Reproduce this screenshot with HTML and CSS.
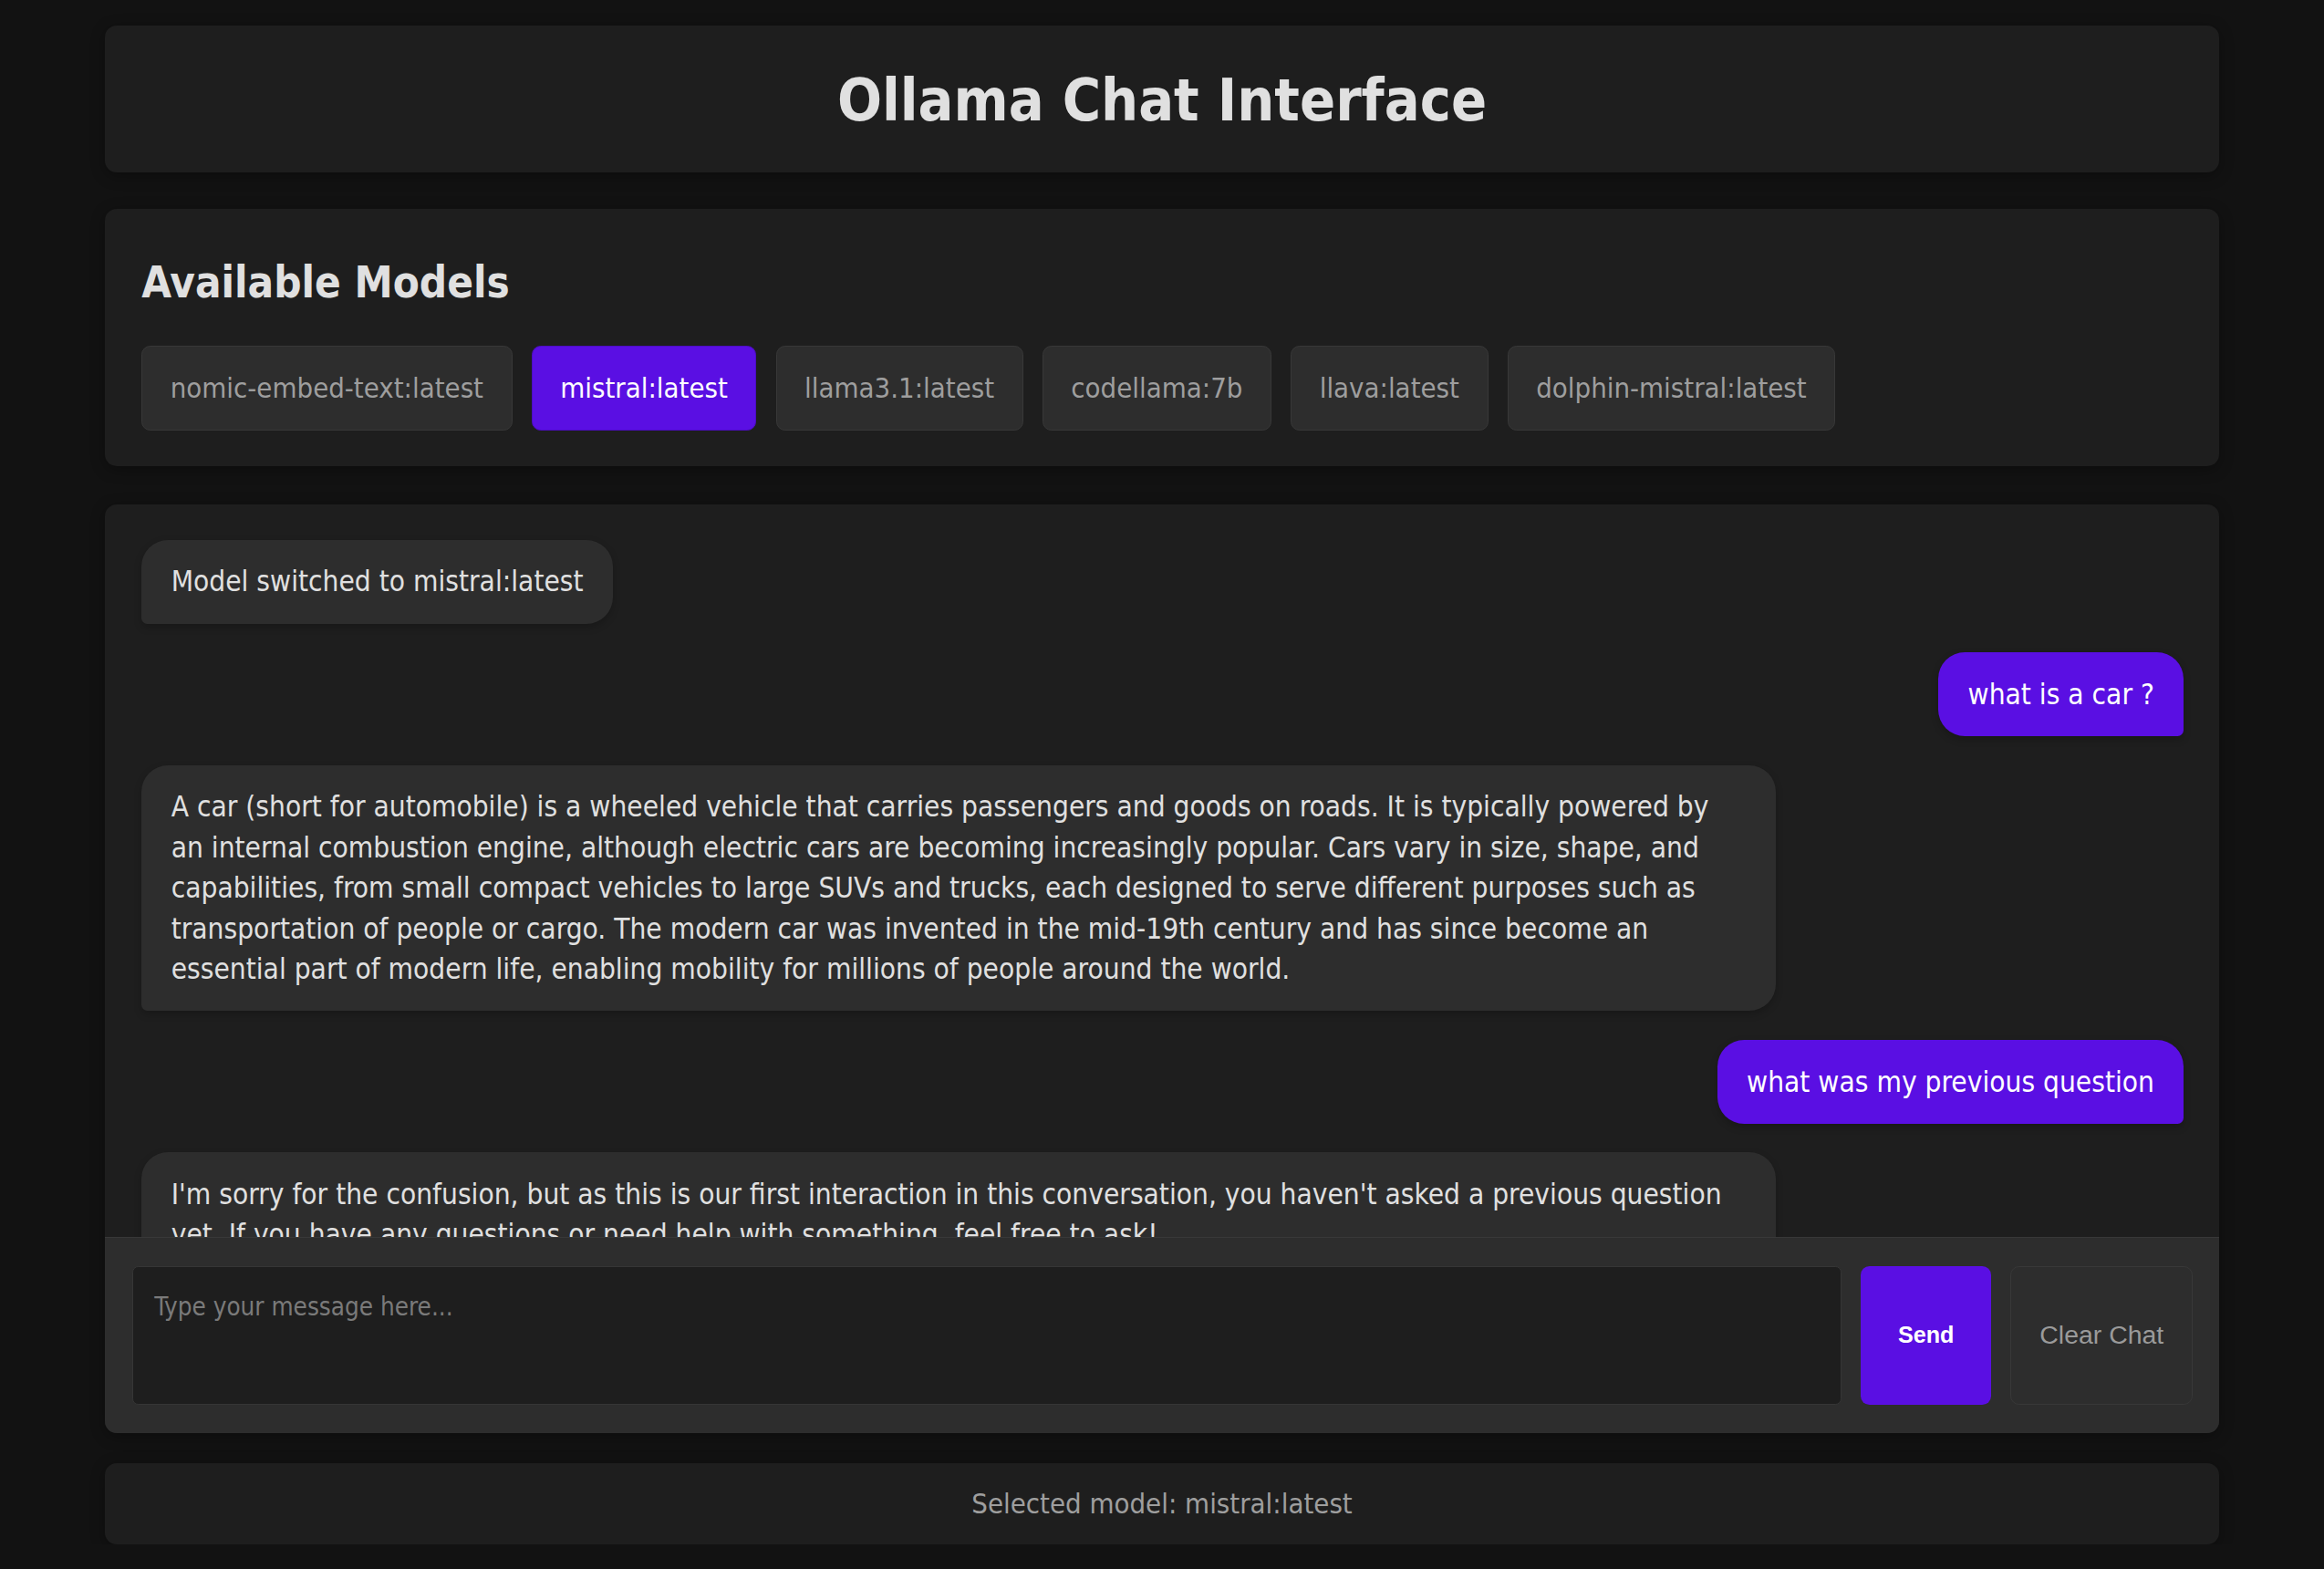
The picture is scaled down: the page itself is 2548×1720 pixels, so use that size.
FILE: index.html
```html
<!DOCTYPE html>
<html lang="en">
<head>
<meta charset="utf-8">
<title>Ollama Chat Interface</title>
<link rel="stylesheet" href="styles.css">
</head>
<body>
<div class="container">
  <header class="card header">
    <h1 class="title">Ollama Chat Interface</h1>
  </header>

  <section class="card models">
    <h2 class="section-title">Available Models</h2>
    <div class="model-list">
      <button class="model-btn">nomic-embed-text:latest</button>
      <button class="model-btn active">mistral:latest</button>
      <button class="model-btn">llama3.1:latest</button>
      <button class="model-btn">codellama:7b</button>
      <button class="model-btn">llava:latest</button>
      <button class="model-btn">dolphin-mistral:latest</button>
    </div>
  </section>

  <section class="card chat">
    <div class="messages">
      <div class="msg assistant">Model switched to mistral:latest</div>
      <div class="msg user">what is a car ?</div>
      <div class="msg assistant">A car (short for automobile) is a wheeled vehicle that carries passengers and goods on roads. It is typically powered by an internal combustion engine, although electric cars are becoming increasingly popular. Cars vary in size, shape, and capabilities, from small compact vehicles to large SUVs and trucks, each designed to serve different purposes such as transportation of people or cargo. The modern car was invented in the mid-19th century and has since become an essential part of modern life, enabling mobility for millions of people around the world.</div>
      <div class="msg user">what was my previous question</div>
      <div class="msg assistant">I'm sorry for the confusion, but as this is our first interaction in this conversation, you haven't asked a previous question yet. If you have any questions or need help with something, feel free to ask!</div>
    </div>
    <div class="input-bar">
      <textarea class="input" placeholder="Type your message here..."></textarea>
      <button class="send-btn">Send</button>
      <button class="clear-btn">Clear Chat</button>
    </div>
  </section>

  <footer class="card status">Selected model: mistral:latest</footer>
</div>
</body>
</html>
```

FILE: styles.css
```css
html {
  zoom: 1.625;
}

* {
  box-sizing: border-box;
}

body {
  margin: 0;
  background: #121212;
  color: #e0e0e0;
  font-family: "DejaVu Sans Condensed", "DejaVu Sans", sans-serif;
}

.container {
  width: 1427px;
  margin: 0 auto;
  padding-top: 17px;
}

.card {
  background: #1e1e1e;
  border-radius: 8px;
  box-shadow: 0 2px 10px rgba(0, 0, 0, 0.3);
}

.header {
  height: 99px;
  padding-top: 2px;
  display: flex;
  align-items: center;
  justify-content: center;
  margin-bottom: 25px;
}

.title {
  margin: 0;
  font-size: 39.5px;
  line-height: 48px;
  font-weight: bold;
  color: #e0e0e0;
}

.models {
  padding: 26px 25px 24px;
  margin-bottom: 26px;
}

.section-title {
  margin: 0 0 18px;
  font-size: 29px;
  line-height: 48px;
  font-weight: bold;
  color: #e0e0e0;
}

.model-list {
  display: flex;
  flex-wrap: wrap;
  gap: 13px;
}

.model-btn {
  font-family: inherit;
  font-size: 19px;
  line-height: 24px;
  padding: 16px 18.8px;
  background: #2d2d2d;
  color: #9e9e9e;
  border: 1px solid #383838;
  border-radius: 6px;
}

.model-btn.active {
  background: #5a0fe3;
  color: #ffffff;
  border-color: #4c0cc4;
}

.chat {
  overflow: hidden;
  margin-bottom: 20px;
}

.messages {
  height: 494px;
  overflow: hidden;
  padding: 24px 24px 0 25px;
  display: flex;
  flex-direction: column;
  gap: 19.5px;
}

.msg {
  max-width: 80%;
  padding: 14.5px 20px;
  font-size: 19.3px;
  line-height: 27.4px;
  border-radius: 18px;
  box-shadow: 0 2px 5px rgba(0, 0, 0, 0.2);
  flex-shrink: 0;
}

.msg.assistant {
  align-self: flex-start;
  background: #2d2d2d;
  color: #e0e0e0;
  border-bottom-left-radius: 4px;
}

.msg.user {
  align-self: flex-end;
  background: #5a0fe3;
  color: #ffffff;
  border-bottom-right-radius: 4px;
}

.input-bar {
  display: flex;
  gap: 13px;
  padding: 19px 18px 19px 19px;
  background: #2d2d2d;
  border-top: 1px solid #383838;
}

.input {
  flex: 1;
  height: 94px;
  padding: 16px 14px 14px;
  background: #1e1e1e;
  color: #e0e0e0;
  border: 1px solid #363636;
  border-radius: 4px;
  font-family: inherit;
  font-size: 17px;
  line-height: 22px;
  resize: none;
  outline: none;
}

.input::placeholder {
  color: #7a7a7a;
}

.send-btn {
  width: 88px;
  height: 94px;
  background: #5a0fe3;
  color: #ffffff;
  border: none;
  border-radius: 6px;
  font-family: "Liberation Sans", Arial, sans-serif;
  font-size: 15.5px;
  font-weight: 600;
}

.clear-btn {
  width: 123px;
  height: 94px;
  background: #2d2d2d;
  color: #9a9a9a;
  border: 1px solid #383838;
  border-radius: 6px;
  font-family: "Liberation Sans", Arial, sans-serif;
  font-size: 17.5px;
}

.status {
  height: 55px;
  display: flex;
  align-items: center;
  justify-content: center;
  font-size: 19px;
  color: #9e9e9e;
}
```
